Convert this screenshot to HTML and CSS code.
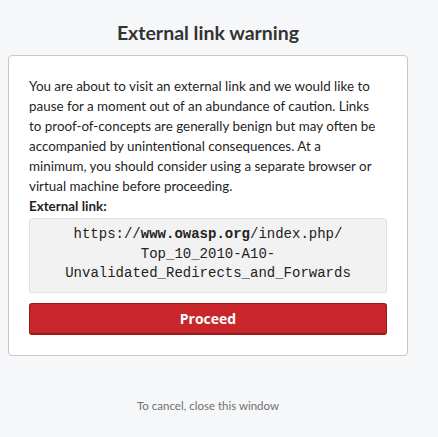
FILE: index.html
```html
<!DOCTYPE html>
<html>
<head>
<meta charset="utf-8">
<link rel="stylesheet" href="styles.css">
</head>
<body>
<div class="page">
  <h1 class="title">External link warning</h1>
  <div class="card">
    <p class="intro">You are about to visit an external link and we would like to<br>pause for a moment out of an abundance of caution. Links<br>to proof-of-concepts are generally benign but may often be<br>accompanied by unintentional consequences. At a<br>minimum, you should consider using a separate browser or<br>virtual machine before proceeding.</p>
    <div class="label">External link:</div>
    <div class="link">https://<b>www.owasp.org</b>/index.php/ Top_10_2010-A10- Unvalidated_Redirects_and_Forwards</div>
    <button class="proceed">Proceed</button>
  </div>
  <div class="cancel">To cancel, close this window</div>
</div>
</body>
</html>
```
FILE: styles.css
```css
html, body {
  margin: 0;
  padding: 0;
  background: #f6f7f9;
}
body {
  padding: 8px;
  font-family: Lato, "Noto Sans", sans-serif;
  color: #1f1f1f;
}
.page {
  width: 400px;
  display: flex;
  flex-direction: column;
}
.title {
  margin: 13px 0 0;
  height: 34px;
  text-align: center;
  font-size: 19.5px;
  font-weight: 700;
  color: #333;
  line-height: 24px;
}
.card {
  background: #fff;
  border: 1px solid #c9c9cc;
  border-radius: 4px;
  padding: 20px 20px 20px 20px;
  display: flex;
  flex-direction: column;
}
.intro {
  margin: 0;
  font-size: 13.4px;
  line-height: 20px;
  white-space: nowrap;
}
.label {
  font-size: 13.4px;
  line-height: 20px;
  font-weight: 700;
}
.link {
  margin-top: 2px;
  background: #f2f2f2;
  border: 1px solid #e2e2e2;
  border-radius: 3px;
  padding: 6px 10px 8px;
  font-family: "Liberation Mono", monospace;
  font-size: 14px;
  line-height: 19.5px;
  text-align: center;
  color: #222;
}
.link b { font-weight: 700; }
.proceed {
  margin-top: 10px;
  height: 32px;
  background: #c8262a;
  border: 1px solid #9a1a1d;
  border-bottom-width: 2px;
  border-radius: 3px;
  color: #fff;
  font-family: "Open Sans", "DejaVu Sans", sans-serif;
  font-weight: 700;
  font-size: 14px;
}
.cancel {
  margin-top: 43px;
  text-align: center;
  font-size: 11.5px;
  color: #707070;
}
```
